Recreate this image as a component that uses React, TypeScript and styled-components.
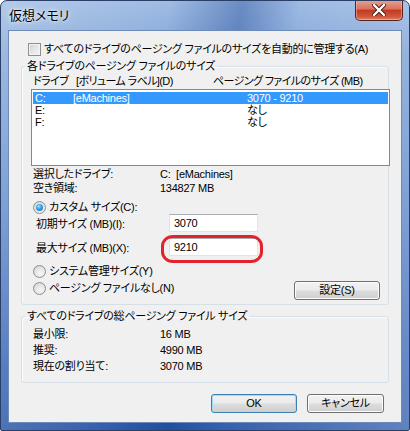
import React from "react";
import styled, { createGlobalStyle, css } from "styled-components";

const GlobalStyle = createGlobalStyle`
  html, body { margin: 0; padding: 0; background: #ffffff; }
  body {
    font-family: "Liberation Sans", "Noto Sans CJK JP", sans-serif;
    font-size: 11px;
    letter-spacing: -0.25px;
    color: #000;
    font-feature-settings: "palt";
  }
  * { box-sizing: border-box; }
`;

const Window = styled.div`
  width: 410px;
  height: 431px;
  display: flex;
  flex-direction: column;
  border: 1px solid #2a3f66;
  border-radius: 7px 7px 2px 2px;
  background:
    linear-gradient(100deg, rgba(255,255,255,0.25) 0%, rgba(255,255,255,0.05) 35%, rgba(20,60,140,0.35) 50%, rgba(255,255,255,0.05) 62%, rgba(255,255,255,0.25) 100%),
    linear-gradient(180deg, #9ab8e2 0%, #7fa3d6 12%, #5f8acb 45%, #3563b5 85%, #2b58a8 100%);
  overflow: hidden;
`;

const TitleBar = styled.div`
  height: 29px;
  display: flex;
  align-items: flex-start;
  padding-left: 8px;
  flex-shrink: 0;
`;

const Title = styled.div`
  margin-top: 6px;
  font-family: "Noto Sans CJK JP", sans-serif;
  font-size: 13px;
  line-height: 16px;
  letter-spacing: 0;
  color: #000;
  text-shadow: 0 0 6px rgba(255,255,255,0.9), 0 0 3px rgba(255,255,255,0.9);
`;

const CloseButton = styled.div`
  margin-left: auto;
  margin-right: 6px;
  margin-top: -1px;
  width: 48px;
  height: 21px;
  border: 1px solid #5a2320;
  border-top: none;
  border-radius: 0 0 5px 5px;
  background: linear-gradient(180deg, #e9a493 0%, #d9705c 45%, #c23a22 52%, #cf5a3f 85%, #e08a6e 100%);
  box-shadow: inset 0 0 0 1px rgba(255,200,190,0.45);
  display: flex;
  align-items: center;
  justify-content: center;
`;

const Client = styled.div`
  flex: 1;
  margin: 0 7px 7px 7px;
  border: 1px solid #6d8ab8;
  background: #f0f0f0;
  display: flex;
  flex-direction: column;
  padding: 12px 13px 0 12px;
`;

const CheckRow = styled.label`
  display: flex;
  align-items: center;
  height: 13px;
  line-height: 13px;
  margin-left: 7px;
  gap: 3px;
  white-space: nowrap;
`;

const Checkbox = styled.span`
  width: 13px;
  height: 13px;
  flex-shrink: 0;
  border: 1px solid #8e8f8f;
  background: linear-gradient(135deg, #cbcfd5 0%, #e4e6e8 50%, #f6f6f6 100%);
  box-shadow: inset 0 0 0 1px #f4f4f4;
`;

const Group = styled.fieldset<{ $top: number; $bottom: number }>`
  margin: ${(p) => p.$top}px 0 0 0;
  padding: 0 0 ${(p) => p.$bottom}px 9px;
  min-width: 0;
  width: 368px;
  border: 1px solid #d5dfe5;
  border-radius: 3px;
  box-shadow: inset 1px 1px 0 #fbfcfd;
  display: flex;
  flex-direction: column;
`;

const Legend = styled.legend`
  padding: 0 2px;
  margin-left: -6px;
  line-height: 13px;
  white-space: nowrap;
`;

const ListHeader = styled.div`
  display: grid;
  grid-template-columns: 43px 137px 1fr;
  padding-left: 2px;
  margin-top: 2px;
  line-height: 13px;
  letter-spacing: -0.6px;
  white-space: nowrap;
`;

const ListBox = styled.div`
  width: 359px;
  height: 77px;
  margin-top: 1px;
  border: 1px solid #828790;
  background: #fff;
  padding: 2px 1px;
`;

const ListRow = styled.div<{ $selected?: boolean }>`
  display: grid;
  grid-template-columns: 38px 174px 1fr;
  height: 12px;
  line-height: 12px;
  padding-left: 2px;
  white-space: nowrap;
  ${(p) =>
    p.$selected &&
    css`
      background: #3399ff;
      color: #fff;
    `}
`;

const InfoGrid = styled.div<{ $top: number; $line: number }>`
  display: grid;
  grid-template-columns: 127px 1fr;
  margin-top: ${(p) => p.$top}px;
  padding-left: 2px;
  line-height: ${(p) => p.$line}px;
  white-space: nowrap;
`;

const RadioRow = styled.label<{ $top: number }>`
  display: flex;
  align-items: center;
  gap: 3px;
  height: 13px;
  line-height: 13px;
  margin-top: ${(p) => p.$top}px;
  padding-left: 2px;
  white-space: nowrap;
`;

const Radio = styled.span<{ $checked?: boolean }>`
  width: 13px;
  height: 13px;
  flex-shrink: 0;
  border-radius: 50%;
  border: 1px solid #8e8f8f;
  background: radial-gradient(circle at 60% 65%, #f6f6f6 0%, #e2e3e5 55%, #c9ccd1 100%);
  display: flex;
  align-items: center;
  justify-content: center;
  &::after {
    content: "";
    display: ${(p) => (p.$checked ? "block" : "none")};
    width: 7px;
    height: 7px;
    border-radius: 50%;
    background: radial-gradient(circle at 40% 35%, #a7e3ff 0%, #3aa4e8 40%, #0f5fb0 100%);
  }
`;

const SizeRow = styled.div<{ $top: number }>`
  display: grid;
  grid-template-columns: 133px 89px;
  align-items: center;
  margin-top: ${(p) => p.$top}px;
  padding-left: 5px;
  height: 18px;
  white-space: nowrap;
`;

const InputWrap = styled.span<{ $marked?: boolean }>`
  position: relative;
  display: block;
  ${(p) =>
    p.$marked &&
    css`
      &::after {
        content: "";
        position: absolute;
        left: -8px;
        top: -3px;
        right: -5px;
        bottom: -7px;
        border: 3px solid #e3232b;
        border-radius: 12px / 11px;
        pointer-events: none;
      }
    `}
`;

const TextBox = styled.div`
  height: 18px;
  width: 89px;
  border: 1px solid #e2e3ea;
  border-top-color: #abadb3;
  background: #fff;
  padding-left: 4px;
  line-height: 16px;
`;

const BottomRow = styled.div`
  display: flex;
  justify-content: space-between;
  align-items: flex-start;
  margin-top: 3px;
  margin-right: 8px;
`;

const Button = styled.div<{ $width: number; $default?: boolean }>`
  width: ${(p) => p.$width}px;
  height: 19px;
  border: 1px solid ${(p) => (p.$default ? "#3c7fb1" : "#707070")};
  border-radius: 3px;
  background: linear-gradient(180deg, #f2f2f2 0%, #ebebeb 48%, #dddddd 52%, #cfcfcf 100%);
  box-shadow: inset 0 0 0 1px ${(p) => (p.$default ? "#9fdcf8" : "#fcfcfc")};
  display: flex;
  align-items: center;
  justify-content: center;
  line-height: 13px;
`;

const ButtonRow = styled.div`
  display: flex;
  justify-content: flex-end;
  gap: 10px;
  margin-top: 11px;
  margin-right: 4px;
`;

export default function App() {
  return (
    <>
      <GlobalStyle />
      <Window>
        <TitleBar>
          <Title>仮想メモリ</Title>
          <CloseButton>
            <svg width="14" height="12" viewBox="0 0 14 12">
              <path d="M2 1 L12 11 M12 1 L2 11" stroke="#4a1f1a" strokeWidth="4.2" strokeLinecap="round" />
              <path d="M2 1 L12 11 M12 1 L2 11" stroke="#ffffff" strokeWidth="2.4" strokeLinecap="round" />
            </svg>
          </CloseButton>
        </TitleBar>
        <Client>
          <CheckRow>
            <Checkbox />
            <span>すべてのドライブのページング ファイルのサイズを自動的に管理する(A)</span>
          </CheckRow>

          <Group $top={4} $bottom={4}>
            <Legend>各ドライブのページング ファイルのサイズ</Legend>
            <ListHeader>
              <span>ドライブ</span>
              <span>[ボリューム ラベル](D)</span>
              <span>ページング ファイルのサイズ (MB)</span>
            </ListHeader>
            <ListBox>
              <ListRow $selected>
                <span>C:</span>
                <span>[eMachines]</span>
                <span>3070 - 9210</span>
              </ListRow>
              <ListRow>
                <span>E:</span>
                <span></span>
                <span>なし</span>
              </ListRow>
              <ListRow>
                <span>F:</span>
                <span></span>
                <span>なし</span>
              </ListRow>
            </ListBox>
            <InfoGrid $top={1} $line={14}>
              <span>選択したドライブ:</span>
              <span>C:&nbsp;&nbsp;[eMachines]</span>
              <span>空き領域:</span>
              <span>134827 MB</span>
            </InfoGrid>
            <RadioRow $top={6}>
              <Radio $checked />
              <span>カスタム サイズ(C):</span>
            </RadioRow>
            <SizeRow $top={0}>
              <span>初期サイズ (MB)(I):</span>
              <InputWrap>
                <TextBox>3070</TextBox>
              </InputWrap>
            </SizeRow>
            <SizeRow $top={6}>
              <span>最大サイズ (MB)(X):</span>
              <InputWrap $marked>
                <TextBox>9210</TextBox>
              </InputWrap>
            </SizeRow>
            <RadioRow $top={9}>
              <Radio />
              <span>システム管理サイズ(Y)</span>
            </RadioRow>
            <BottomRow>
              <RadioRow $top={1}>
                <Radio />
                <span>ページング ファイルなし(N)</span>
              </RadioRow>
              <Button $width={86}>設定(S)</Button>
            </BottomRow>
          </Group>

          <Group $top={5} $bottom={8}>
            <Legend>すべてのドライブの総ページング ファイル サイズ</Legend>
            <InfoGrid $top={3} $line={16}>
              <span>最小限:</span>
              <span>16 MB</span>
              <span>推奨:</span>
              <span>4990 MB</span>
              <span>現在の割り当て:</span>
              <span>3070 MB</span>
            </InfoGrid>
          </Group>

          <ButtonRow>
            <Button $width={86} $default>OK</Button>
            <Button $width={77}>キャンセル</Button>
          </ButtonRow>
        </Client>
      </Window>
    </>
  );
}
